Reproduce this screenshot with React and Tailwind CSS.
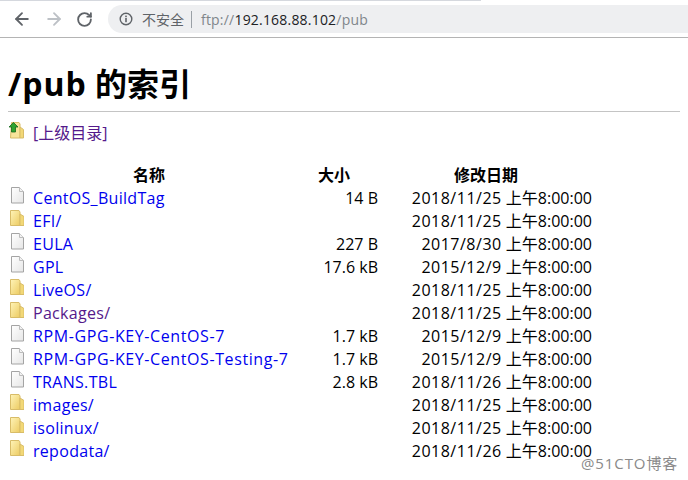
import { ArrowLeft, ArrowRight, RotateCw } from "lucide-react";

const rows = [
  { name: "CentOS_BuildTag", size: "14 B", day: "2018/11/25" },
  { name: "EFI/", dir: true, day: "2018/11/25" },
  { name: "EULA", size: "227 B", day: "2017/8/30" },
  { name: "GPL", size: "17.6 kB", day: "2015/12/9" },
  { name: "LiveOS/", dir: true, day: "2018/11/25" },
  { name: "Packages/", dir: true, visited: true, day: "2018/11/25" },
  { name: "RPM-GPG-KEY-CentOS-7", wide: true, size: "1.7 kB", day: "2015/12/9" },
  { name: "RPM-GPG-KEY-CentOS-Testing-7", wide: true, size: "1.7 kB", day: "2015/12/9" },
  { name: "TRANS.TBL", size: "2.8 kB", day: "2018/11/26" },
  { name: "images/", dir: true, day: "2018/11/25" },
  { name: "isolinux/", dir: true, day: "2018/11/25" },
  { name: "repodata/", dir: true, day: "2018/11/26" },
];

function FileIcon() {
  return (
    <svg width="16" height="17" viewBox="0 0 16 17" className="shrink-0">
      <defs>
        <linearGradient id="page" x1="0" y1="0" x2="1" y2="1">
          <stop offset="0" stopColor="#ffffff" />
          <stop offset="1" stopColor="#e6e6e6" />
        </linearGradient>
      </defs>
      <path d="M3.500 0.500h8l4 4v11.500h-12z" fill="url(#page)" stroke="#a4a4a4" />
      <path d="M11.500 0.500v4h4" fill="#f2f2f2" stroke="#bcbcbc" />
    </svg>
  );
}

function FolderIcon() {
  return (
    <svg width="16" height="17" viewBox="0 0 16 17" className="shrink-0">
      <defs>
        <linearGradient id="fold" x1="0" y1="0" x2="1" y2="1">
          <stop offset="0" stopColor="#fff4b8" />
          <stop offset="1" stopColor="#eccb62" />
        </linearGradient>
      </defs>
      <path d="M2.500 0.500h8.500l1 1.500v13.500h-9.500z" fill="url(#fold)" stroke="#d8bc68" />
      <path d="M12 4l4 2.500v9h-4z" fill="#f2d877" stroke="#d8bc68" />
    </svg>
  );
}

function ParentIcon() {
  return (
    <svg width="16" height="18" viewBox="0 0 16 18" className="shrink-0">
      <path d="M3.500 0.500h7.500l1 1.500v14h-9.500z" fill="#f8e49a" stroke="#d8bc68" />
      <path d="M12 5l3.500 2.500v8.500h-3.500z" fill="#f2d877" stroke="#d8bc68" />
      <path d="M5.500 0.500l4.500 4.500h-2.500v5h-4v-5h-2.500z" fill="#2fa32f" stroke="#14661a" strokeWidth="0.8" />
    </svg>
  );
}

export default function App() {
  return (
    <div className="relative h-[480px] w-[688px] overflow-hidden bg-white text-black font-['Open_Sans','Noto_Sans_CJK_SC',sans-serif]">
      <div className="h-px w-[481px] bg-[#d5d8de]" />
      <div className="h-[37px] border-b border-[#b4b4b4] flex items-center pl-[12px] gap-[12px]">
        <ArrowLeft size={20} strokeWidth={2.2} className="text-[#5f6368]" />
        <ArrowRight size={20} strokeWidth={2.2} className="text-[#bdc1c6]" />
        <RotateCw size={17} strokeWidth={2.6} className="text-[#5f6368]" />
        <div className="ml-[3px] flex h-[28px] flex-1 items-center rounded-l-full bg-[#eeeff1] pl-[11px] text-[14px]">
          <svg width="14" height="14" viewBox="0 0 14 14" className="shrink-0">
            <circle cx="7" cy="7" r="5.800" fill="none" stroke="#5f6368" strokeWidth="1.400" />
            <rect x="6.200" y="6" width="1.600" height="4.200" fill="#5f6368" />
            <rect x="6.200" y="3.600" width="1.600" height="1.600" fill="#5f6368" />
          </svg>
          <span className="ml-[9px] text-[#5f6368]">不安全</span>
          <span className="ml-[7px] mr-[9px] h-[17px] w-px bg-[#9aa0a6]" />
          <span className="text-[#80868b] tracking-[0.2px]">
            ftp://<span className="text-[#202124]">192.168.88.102</span>/pub
          </span>
        </div>
      </div>

      <div className="px-[8px]">
        <h1 className="mt-[21px] text-[32px] leading-[50px] font-bold">
          <span className="tracking-[1px]">/pub</span> 的索引
        </h1>
        <div className="mt-[2px] h-px bg-[#c4c4c4]" />
        <div className="mt-[10px] flex h-[22px] items-start">
          <ParentIcon />
          <a className="ml-[9px] text-[16px] leading-[22px] text-[#551a8b]">[上级目录]</a>
        </div>
        <table className="mt-[20px] w-[584px] table-fixed text-[16px] leading-[23px]">
          <thead>
            <tr className="h-[23px]">
              <th className="w-[282px] text-center font-bold">名称</th>
              <th className="w-[88px] text-center font-bold">大小</th>
              <th className="pl-[2px] text-center font-bold">修改日期</th>
            </tr>
          </thead>
          <tbody>
            {rows.map((r) => (
              <tr key={r.name} className="h-[23px]">
                <td className="whitespace-nowrap">
                  <div className="flex items-start gap-[9px]">
                    {r.dir ? <FolderIcon /> : <FileIcon />}
                    <a
                      className={`${r.visited ? "text-[#551a8b]" : "text-[#0000ee]"} ${
                        r.wide ? "tracking-[0.6px]" : "tracking-[0.3px]"
                      }`}
                    >
                      {r.name}
                    </a>
                  </div>
                </td>
                <td className="text-right whitespace-nowrap">{r.size}</td>
                <td className="text-right whitespace-nowrap">
                  <span className="tracking-[0.5px]">{r.day}</span> 上午8:00:00
                </td>
              </tr>
            ))}
          </tbody>
        </table>
      </div>

      <div className="absolute left-[581px] top-[453px] text-[15px] leading-[20px] tracking-[0.9px] text-[#8a8a8a]">@51CTO博客</div>
    </div>
  );
}
